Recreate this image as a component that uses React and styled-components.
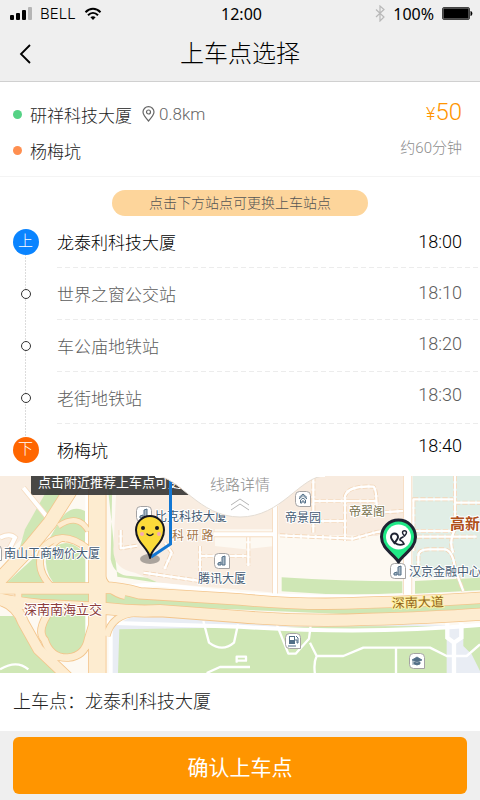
import React, { useState } from 'react';
import styled, { createGlobalStyle } from 'styled-components';

const GlobalStyle = createGlobalStyle`
  * {
    box-sizing: border-box;
  }

  body {
    margin: 0;
    background: #ffffff;
    font-family: Roboto, 'Noto Sans CJK SC', sans-serif;
    font-weight: 300;
  }

  button {
    font: inherit;
    color: inherit;
    border: none;
    background: none;
    padding: 0;
    cursor: pointer;
  }
`;

const Page = styled.div`
  display: flex;
  flex-direction: column;
  min-height: 100vh;
`;

const StatusBar = styled.div`
  display: grid;
  grid-template-columns: 1fr auto 1fr;
  align-items: center;
  height: 27px;
  padding: 0 7px 0 10px;
  background: #efefef;
  color: #000;
  font-family: 'Noto Sans', sans-serif;
  font-size: 16px;
  font-weight: 400;
`;

const StatusGroup = styled.div`
  display: flex;
  align-items: center;
  justify-content: ${(p) => (p.$end ? 'flex-end' : 'flex-start')};
  gap: 8px;
`;

const Carrier = styled.span`
  font-family: Inter, sans-serif;
  font-size: 15px;
  font-weight: 300;
`;

const Header = styled.header`
  display: grid;
  grid-template-columns: 50px 1fr 50px;
  height: 55px;
  background: #efefef;
  border-bottom: 1px solid #d0d0d0;
`;

const BackButton = styled.button`
  display: flex;
  align-items: center;
  justify-content: center;
`;

const Title = styled.h1`
  margin: 0;
  text-align: center;
  font-size: 24px;
  font-weight: 300;
  line-height: 54px;
  color: #000;
`;

const Summary = styled.section`
  display: flex;
  justify-content: space-between;
  height: 95px;
  padding: 14px 18px 0 13px;
  border-bottom: 1px solid #f4f4f4;
`;

const SummaryColumn = styled.div`
  display: flex;
  flex-direction: column;
  align-items: ${(p) => (p.$end ? 'flex-end' : 'flex-start')};
`;

const Place = styled.div`
  display: flex;
  align-items: center;
  height: 36px;
  font-size: 17px;
  color: #222;
`;

const Dot = styled.span`
  width: 9px;
  height: 9px;
  margin-right: 8px;
  border-radius: 50%;
  background: ${(p) => p.$color};
`;

const Distance = styled.span`
  display: flex;
  align-items: center;
  gap: 4px;
  margin-left: 10px;
  font-size: 17px;
  color: #666;
`;

const Price = styled.div`
  height: 34px;
  line-height: 32px;
  font-size: 24px;
  color: #ff9500;

  small {
    font-size: 18px;
  }
`;

const Duration = styled.div`
  line-height: 36px;
  font-size: 15px;
  color: #8c8c8c;
`;

const Route = styled.section`
  padding-top: 13px;
`;

const Tip = styled.p`
  width: 256px;
  margin: 0 auto;
  border-radius: 13px;
  background: #fdd59b;
  color: #555;
  font-size: 14px;
  line-height: 26px;
  text-align: center;
`;

const Stops = styled.div`
  display: grid;
  grid-template-columns: 57px 1fr auto 18px;
`;

const Rail = styled.div`
  grid-area: 1 / 1;
  display: flex;
  flex-direction: column;
  padding-left: 12px;
  background: repeating-linear-gradient(#dcdcdc 0 2px, transparent 2px 3px) 25px 26px / 1px 208px no-repeat;
`;

const RailRow = styled.div`
  display: flex;
  align-items: center;
  justify-content: center;
  width: 27px;
  height: 52px;
`;

const Stop = styled.span`
  width: 10px;
  height: 10px;
  border: 1px solid #333;
  border-radius: 50%;
  background: #fff;
`;

const EndStop = styled.span`
  width: 26px;
  height: 26px;
  border-radius: 50%;
  background: ${(p) => p.$color};
  color: #fff;
  font-size: 15px;
  line-height: 25px;
  text-align: center;
`;

const Names = styled.div`
  grid-area: 1 / 2 / 2 / 5;
  display: flex;
  flex-direction: column;
`;

const StopName = styled.button`
  height: 52px;
  padding-bottom: 2px;
  text-align: left;
  font-size: 17px;
  color: ${(p) => (p.$active ? '#000' : '#5c5c5c')};
  background: repeating-linear-gradient(90deg, #ececec 0 5px, transparent 5px 8px) 0 100% / 100% 1px no-repeat;

  &:last-child {
    background: none;
  }
`;

const Times = styled.div`
  grid-area: 1 / 3;
  pointer-events: none;
`;

const Time = styled.div`
  font-size: 18px;
  line-height: 51px;
  color: ${(p) => (p.$active ? '#000' : '#5c5c5c')};
`;

const MapArea = styled.section`
  position: relative;
  flex: 1;
  min-height: 197px;
  overflow: hidden;
`;

const Layer = styled.svg`
  position: absolute;
  inset: 0;
  width: 100%;
  height: 100%;
  font-family: 'Noto Sans CJK SC', sans-serif;
  font-size: 12px;
  font-weight: 400;
`;

const MapHint = styled.div`
  position: absolute;
  top: 0;
  left: 31px;
  height: 19px;
  padding: 0 7px;
  border-radius: 0 0 2px 2px;
  background: rgba(52, 52, 52, 0.9);
  color: #fff;
  font-size: 13px;
  font-weight: 400;
  line-height: 14px;
  white-space: nowrap;
`;

const DetailsButton = styled.button`
  position: absolute;
  top: 0;
  left: 50%;
  display: grid;
  justify-items: center;
  width: 170px;
  height: 43px;
  transform: translateX(-50%);
`;

const DetailsShape = styled.svg`
  grid-area: 1 / 1;
`;

const DetailsLabel = styled.span`
  grid-area: 1 / 1;
  display: flex;
  flex-direction: column;
  align-items: center;
  gap: 4px;
  font-size: 15px;
  line-height: 18px;
  color: #8c8c8c;
`;

const Pickup = styled.div`
  height: 58px;
  padding: 0 13px;
  background: #fff;
  color: #222;
  font-size: 18px;
  line-height: 57px;
`;

const Footer = styled.footer`
  padding: 6px 13px;
  height: 69px;
  background: #efefef;
`;

const ConfirmButton = styled.button`
  width: 100%;
  height: 57px;
  border-radius: 6px;
  background: #ff9500;
  color: #fff;
  font-size: 21px;
  font-weight: 400;
`;

const stops = [
  { name: '龙泰利科技大厦', time: '18:00', mark: '上', color: '#0a84ff' },
  { name: '世界之窗公交站', time: '18:10' },
  { name: '车公庙地铁站', time: '18:20' },
  { name: '老街地铁站', time: '18:30' },
  { name: '杨梅坑', time: '18:40', mark: '下', color: '#ff6600' },
];

const SignalIcon = () => (
  <svg width="22" height="14" viewBox="0 0 22 14">
    <rect x="0" y="8" width="4" height="5" rx="1" />
    <rect x="6" y="6" width="4" height="7" rx="1" />
    <rect x="12" y="3" width="4" height="10" rx="1" />
    <rect x="18" y="0" width="4" height="13" rx="1" fill="#b5b5b5" />
  </svg>
);

const WifiIcon = () => (
  <svg width="18" height="14" viewBox="0 0 18 14" fill="none" stroke="#000" strokeWidth="2">
    <path d="M1.5 5.2C6 .6 12 .6 16.5 5.2M4 8.2c3-3 7-3 10 0" />
    <path d="M9 13 6.4 10.2c1.6-1.4 3.6-1.4 5.2 0z" fill="#000" stroke="none" />
  </svg>
);

const BluetoothIcon = () => (
  <svg width="10" height="17" viewBox="0 0 10 17" fill="none" stroke="#b8b8b8" strokeWidth="1.2">
    <path d="M1 4.5 9 12l-4 4V1l4 3.5L1 12" />
  </svg>
);

const BatteryIcon = () => (
  <svg width="31" height="13" viewBox="0 0 31 13">
    <rect x=".5" y=".5" width="27" height="12" rx="1.5" fill="#999" stroke="#444" />
    <rect x="1.5" y="1.5" width="25" height="10" />
    <path d="M28.5 4c2.5.5 2.5 4.5 0 5z" />
  </svg>
);

const PinIcon = () => (
  <svg width="13" height="16" viewBox="0 0 13 16" fill="none" stroke="#666" strokeWidth="1.2">
    <path d="M6.5 15C3 11.2 1 8.5 1 6.1a5.5 5.5 0 0 1 11 0c0 2.4-2 5.1-5.5 8.9z" />
    <circle cx="6.5" cy="6" r="2" />
  </svg>
);

const Poi = ({ x, y, kind }) => (
  <g transform={`translate(${x} ${y})`}>
    <path d="M-7.5-3.5q0-4 4-4h7q4 0 4 4v11h-11q-4 0-4-4z" fill="#fff" stroke="#a5a3a3" />
    {kind === 'home' && <path d="M-4 0 0-3.5 4 0M-4-1.500 0-5l4 3.500M-2.500 4V1L0-1l2.500 2v3H1V2h-2v2z" stroke="#526f87" />}
    {kind === 'tower' && <path d="M-4 4V2l3-1v3zM0 4v-8l3-1v9z" fill="#a9b9c6" stroke="#526f87" />}
    {kind === 'fuel' && (
      <>
        <path d="M-4-5h6v8h-6zM-3-4v3h4v-3z" fill="#526f87" fillRule="evenodd" />
        <path d="M-5 5h8M2-1h2v3h1v-5L3-5" stroke="#526f87" />
      </>
    )}
    {kind === 'school' && <path d="m-5-1 5-3 5 3-5 2zm2 2v2q3 2 6 0V1L0 2zM-4 0v4" fill="#526f87" stroke="#526f87" strokeWidth=".8" />}
  </g>
);

const Label = ({ x, y, color = '#455b73', halo = '#fff', ...rest }) => (
  <text x={x} y={y} fill={color} stroke={halo} strokeWidth="2" paintOrder="stroke" strokeLinejoin="round" {...rest} />
);

const ramps = [
  { d: 'M175 150q60-40 90 15', width: 14 },
  { d: 'M120 225q60-75 145-5', width: 18 },
  { d: 'M130 220q-30 60 30 118', width: 18 },
  { d: 'M200 195q-10-15-40 15', width: 8 },
  { d: 'M152 402q-45 62-18 90 18 55 70 53 50-5 60-55l12-40', width: 20 },
  { d: 'M-5 370q55 15 75 70l45 80 95 90', width: 30 },
  { d: 'M150 545q80 10 120-40', width: 12 },
  { d: 'M305 300q20 50 70 60M320 480q15-65 90-70', width: 18 },
  { d: 'M245-10 150 140 80 225-10 320', width: 40 },
  { d: 'M55 335v45', width: 18 },
  { d: 'M-10 337h280q70-8 150 15l300 18q200 20 380 10 200-5 350-15', width: 32 },
  { d: 'M-10 368q60 14 130 20l200 10q80 10 160 6l240 18q200 16 380 8 200-5 350-16', width: 34 },
  { d: 'M292-10v620', width: 50 },
];

const blockStreets =
  'M362 162v55l50-8M495 200l20 30-22 50M600 210v110M600 240h140M745 180v90M430 290l170 25M940 0v170M940 75h130M950 135h90M1035 195V60q10-32 85-28 10 5 10 70M1040 75h90M1130 110l80-5M840 178l220 10 70-20 70-8M1240 225V70h120M1240 165h120M1365 0v160M1365 80h80M1250 182h180M1255 300v-60q0-20 30-20h50q25 5 30 60l25 65M1365 160q-20 40-5 70';

const mainStreets = 'm70 35 85 105M0 185q30-15 45 0l-20 40M825 90v265M640 175h180';

const Streets = () => (
  <Layer viewBox="0 0 1440 591" preserveAspectRatio="xMidYMid slice" fill="none">
    <rect width="1440" height="591" fill="#fdf9f2" />

    {/* blocks */}
    <path d="M0 0h160l-85 180-75 70z" fill="#f9ede1" />
    <path d="M165 0h75L75 225l-20 5 20-70z" fill="#cfe7b5" />
    <path d="M255 60v45q-50-25-85 45l-40 70-110 100 110 5-15-60 20-45q60-60 120-15z" fill="#cfe7b5" />
    <path d="M140 235q60-70 120 5v80h-100q-30-40-20-85z" fill="#cfe7b5" />
    <path d="M322 20h15l-5 230q10 50 60 50l90 10v12l-130-20z" fill="#cfe7b5" />
    <path d="M350 20h475v140H645v50l90 10 90-10v140l-350-30-70-30q-65-10-65-70z" fill="#f9ede1" />
    <path d="M835 0h375v150l-80 30-295-5z" fill="#f8ebdf" />
    <path d="M1238 0h202v305h-202z" fill="#e1eee6" />
    <path d="M845 304q180 12 362 12v35q-180 10-362-5zM1245 315l195-10v38l-195 10z" fill="#cfe7b5" />
    <path d="M60 350h260q300 25 760 48l360-20v20l-360 18-640-27-380-22z" fill="#cfe7b5" />
    <path d="M0 420h40l130 171H0zM140 410h118v80l-20 40-50 15-60-40z" fill="#cfe7b5" />
    <path d="M330 591V455l70-35 1040 30v141z" fill="#e9edf4" />
    <path d="M358 460q500-10 1082-10v141H354z" fill="#cfe7b5" />
    <path d="M1340 450h50v60l25 25 25 50v6h-100z" fill="#e9edf4" />

    {/* side streets */}
    <path d={blockStreets} stroke="#f3d6b8" strokeWidth="12" strokeLinejoin="round" strokeDasharray="16 6" />
    <path d={blockStreets} stroke="#fff" strokeWidth="7" strokeLinejoin="round" />
    <path d={mainStreets} stroke="#f6dcc0" strokeWidth="17" />
    <path d={mainStreets} stroke="#fff" strokeWidth="12" />
    <path d="M1223 0v360" stroke="#f6dcc0" strokeWidth="27" />
    <path d="M1223 0v360" stroke="#fff" strokeWidth="22" />
    <path
      d="M610 435l17 65q40 30 75 0l12-55M830 445l35 88h22l40-45 5-40M930 500l20 40h80l60-25h200l50 25h60l40-35M1188 515v80M950 540q-10 20-5 55M620 591l40-18h90M710 557v-15h28v12h-28zM0 580q50-30 85 0"
      stroke="#fff"
      strokeWidth="7"
      strokeLinejoin="round"
    />
    <path d="M1342 440v45l20 15 22-15v-45M1362 500v95" stroke="#fff" strokeWidth="13" />

    {/* highways, all edges below all surfaces so that junctions stay open */}
    <path d="M320 335 470 325l250 28q300 20 720 0M320 440l400 12q380 25 720-5M262 20v300M262 410v80M332 430v161" stroke="#fff" strokeWidth="12" />
    {ramps.map((r) => (
      <path key={r.d} d={r.d} stroke="#f3c58c" strokeWidth={r.width + 5} />
    ))}
    {ramps.map((r) => (
      <path key={r.d} d={r.d} stroke="#fdecd0" strokeWidth={r.width} />
    ))}
  </Layer>
);

const Labels = () => (
  <Layer viewBox="0 0 480 197" preserveAspectRatio="xMidYMid slice" fill="none">
    <Poi x={144} y={38} kind="tower" />
    <Poi x={222} y={85} kind="tower" />
    <Poi x={303} y={23} kind="home" />
    <Poi x={398} y={95} kind="tower" />
    <Poi x={293} y={165} kind="fuel" />
    <Poi x={417} y={185} kind="school" />
    <Poi x={-6} y={77} />

    <Label x={155} y={45}>比克科技大厦</Label>
    <Label x={172} y={64} color="#a5764a">科 研 路</Label>
    <Label x={4} y={82}>南山工商物价大厦</Label>
    <Label x={285} y={46}>帝景园</Label>
    <Label x={349} y={40} color="#77704a">帝翠阁</Label>
    <Label x={198} y={107}>腾讯大厦</Label>
    <Label x={409} y={100}>汉京金融中心</Label>
    <Label x={450} y={53} color="#b0501a" fontSize="15" fontWeight="700">高新</Label>
    <Label x={24} y={138} color="#8c3d3d" fontSize="13">深南南海立交</Label>
    <Label x={392} y={132} color="#94651c" halo="#fdf2a0" fontSize="13" transform="rotate(-2 392 132)">深南大道</Label>
  </Layer>
);

const Markers = () => (
  <Layer viewBox="0 0 480 197" preserveAspectRatio="xMidYMid slice" fill="none">
    <ellipse cx="150" cy="83" rx="10" ry="5" fill="#8a8580" opacity=".7" />
    <path d="M170.5 0v68L151 81" stroke="#1277d3" strokeWidth="3" />
    <path d="M150 82c-1-10-14-15-14-28a14 14 0 0 1 28 0c0 13-13 18-14 28z" fill="#fbdb3a" stroke="#16181f" strokeWidth="2" strokeLinejoin="round" />
    <circle cx="143" cy="52" r="2" fill="#16181f" />
    <circle cx="157" cy="52" r="2" fill="#16181f" />
    <circle cx="142" cy="58" r="2" fill="#f7a8b4" />
    <circle cx="159" cy="58" r="2" fill="#f7a8b4" />
    <path d="M147 58q3 3 6 0" stroke="#16181f" strokeWidth="1.5" strokeLinecap="round" />

    <path d="M398.5 86C394 78 381.5 73 381.5 61a17 17 0 0 1 34 0c0 12-12.5 17-17 25z" fill="#1fe886" stroke="#1f2433" strokeWidth="3" strokeLinejoin="round" />
    <circle cx="398.5" cy="61" r="12.5" fill="#fff" />
    <path d="M394.5 67c-2.5-3-3.5-4.300-3.500-6a3.500 3.500 0 0 1 7 0c0 1.700-1 3-3.500 6z" stroke="#1f2433" strokeWidth="2" />
    <path d="M404.5 60c-1.3-1.5-2-2.500-2-3.300a2 2 0 0 1 4 0c0 .8-.7 1.800-2 3.300z" stroke="#1f2433" strokeWidth="1.4" />
    <path d="M395 67q4 3 9 1-1-3-4-4 0-2 3-3" stroke="#1f2433" strokeWidth="1.8" strokeLinecap="round" strokeLinejoin="round" />
  </Layer>
);

const App = () => {
  const [pickup, setPickup] = useState(0);

  return (
    <>
      <GlobalStyle />
      <Page>
        <StatusBar>
          <StatusGroup>
            <SignalIcon />
            <Carrier>BELL</Carrier>
            <WifiIcon />
          </StatusGroup>
          <span>12:00</span>
          <StatusGroup $end>
            <BluetoothIcon />
            100%
            <BatteryIcon />
          </StatusGroup>
        </StatusBar>

        <Header>
          <BackButton type="button" aria-label="返回">
            <svg width="12" height="20" viewBox="0 0 12 20" fill="none" stroke="#000" strokeWidth="1.8">
              <path d="M11 1 2 10l9 9" />
            </svg>
          </BackButton>
          <Title>上车点选择</Title>
        </Header>

        <Summary>
          <SummaryColumn>
            <Place>
              <Dot $color="#55d285" />
              研祥科技大厦
              <Distance><PinIcon /> 0.8km</Distance>
            </Place>
            <Place>
              <Dot $color="#ff8f50" />
              杨梅坑
            </Place>
          </SummaryColumn>
          <SummaryColumn $end>
            <Price><small>¥</small>50</Price>
            <Duration>约60分钟</Duration>
          </SummaryColumn>
        </Summary>

        <Route>
          <Tip>点击下方站点可更换上车站点</Tip>
          <Stops>
            <Rail>
              {stops.map((stop) => (
                <RailRow key={stop.name}>
                  {stop.mark ? <EndStop $color={stop.color}>{stop.mark}</EndStop> : <Stop />}
                </RailRow>
              ))}
            </Rail>
            <Names>
              {stops.map((stop, i) => (
                <StopName
                  key={stop.name}
                  type="button"
                  $active={i === pickup || i === stops.length - 1}
                  onClick={() => setPickup(i)}
                >
                  {stop.name}
                </StopName>
              ))}
            </Names>
            <Times>
              {stops.map((stop, i) => (
                <Time key={stop.time} $active={i === pickup || i === stops.length - 1}>{stop.time}</Time>
              ))}
            </Times>
          </Stops>
        </Route>

        <MapArea>
          <Streets />
          <Labels />
          <MapHint>点击附近推荐上车点可更换</MapHint>
          <Markers />
          <DetailsButton type="button">
            <DetailsShape width="170" height="43" viewBox="0 0 170 43">
              <path d="M0 0c25 0 43 41 85 41S145 0 170 0z" fill="#fff" stroke="#e4ddd4" />
              <path d="M0 0h170" stroke="#fff" strokeWidth="2" />
            </DetailsShape>
            <DetailsLabel>
              线路详情
              <svg width="20" height="13" viewBox="0 0 20 13" fill="none" stroke="#b5b5b5">
                <path d="m1 7 9-6 9 6M1 12l9-6 9 6" />
              </svg>
            </DetailsLabel>
          </DetailsButton>
        </MapArea>

        <Pickup>上车点：{stops[pickup].name}</Pickup>
        <Footer>
          <ConfirmButton type="button">确认上车点</ConfirmButton>
        </Footer>
      </Page>
    </>
  );
};

export default App;
